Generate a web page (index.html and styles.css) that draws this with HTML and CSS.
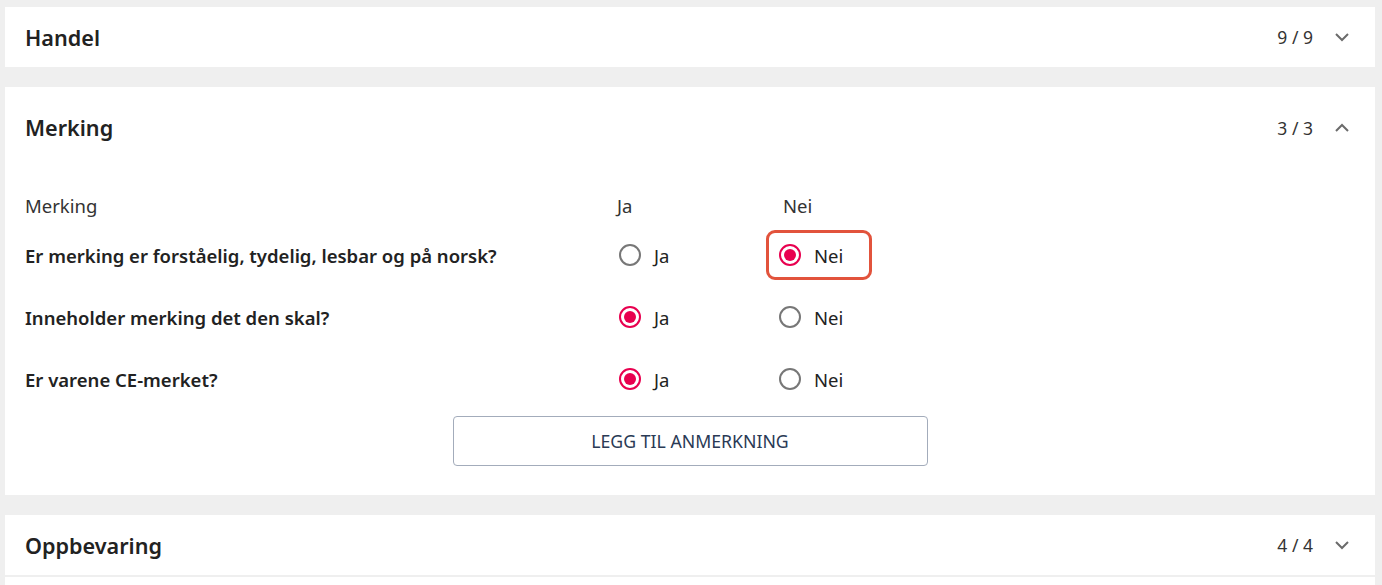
FILE: index.html
```html
<!DOCTYPE html>
<html lang="no">
<head>
<meta charset="utf-8">
<title>Kontroll</title>
<link rel="stylesheet" href="styles.css">
</head>
<body>
<div class="page">
  <section class="card">
    <div class="card-head">
      <h2 class="title">Handel</h2>
      <div class="meta"><span class="count">9 / 9</span>
        <svg class="chev" width="16" height="10" viewBox="0 0 16 10"><path d="M2 2 L8 8 L14 2" fill="none" stroke="#6b6b6b" stroke-width="2"/></svg>
      </div>
    </div>
  </section>

  <section class="card">
    <div class="card-head open">
      <h2 class="title">Merking</h2>
      <div class="meta"><span class="count">3 / 3</span>
        <svg class="chev" width="16" height="10" viewBox="0 0 16 10"><path d="M2 8 L8 2 L14 8" fill="none" stroke="#6b6b6b" stroke-width="2"/></svg>
      </div>
    </div>
    <div class="card-body">
      <div class="grid">
        <div class="cell colhead">Merking</div>
        <div class="cell colhead ja">Ja</div>
        <div class="cell colhead nei">Nei</div>

        <div class="cell q">Er merking er forståelig, tydelig, lesbar og på norsk?</div>
        <div class="cell"><label class="opt"><span class="radio"></span>Ja</label></div>
        <div class="cell"><label class="opt focus"><span class="radio on"></span>Nei</label></div>

        <div class="cell q">Inneholder merking det den skal?</div>
        <div class="cell"><label class="opt"><span class="radio on"></span>Ja</label></div>
        <div class="cell"><label class="opt"><span class="radio"></span>Nei</label></div>

        <div class="cell q">Er varene CE-merket?</div>
        <div class="cell"><label class="opt"><span class="radio on"></span>Ja</label></div>
        <div class="cell"><label class="opt"><span class="radio"></span>Nei</label></div>
      </div>
      <div class="actions"><button class="btn">LEGG TIL ANMERKNING</button></div>
    </div>
  </section>

  <section class="card">
    <div class="card-head">
      <h2 class="title">Oppbevaring</h2>
      <div class="meta"><span class="count">4 / 4</span>
        <svg class="chev" width="16" height="10" viewBox="0 0 16 10"><path d="M2 2 L8 8 L14 2" fill="none" stroke="#6b6b6b" stroke-width="2"/></svg>
      </div>
    </div>
  </section>
  <section class="card stub"></section>
</div>
</body>
</html>
```
FILE: styles.css
```css
* { box-sizing: border-box; }
html, body { margin: 0; padding: 0; }
body {
  background: #efefef;
  font-family: "Noto Sans", "Open Sans", sans-serif;
  color: #222;
  overflow: hidden;
  height: 585px;
}
.page {
  padding: 7px 7px 0 5px;
  display: flex;
  flex-direction: column;
  gap: 20px;
}
.card {
  background: #fff;
}
.card.stub { height: 20px; margin-top: -18px; }
.card-head {
  height: 60px;
  display: flex;
  align-items: center;
  justify-content: space-between;
  padding: 0 25px 0 20px;
}
.card-head.open { height: 81px; }
.title {
  margin: 0;
  font-size: 21.6px;
  font-weight: 600;
  color: #222;
}
.meta {
  display: flex;
  align-items: center;
  gap: 21px;
  color: #333;
  font-size: 17.5px;
}
.chev { display: block; }
.card-body {
  padding: 18px 20px 29px 20px;
}
.grid {
  display: grid;
  grid-template-columns: 592px 160px 1fr;
  grid-auto-rows: 62px;
  grid-template-rows: 38px;
  align-items: center;
}
.cell { font-size: 18.5px; }
.colhead { color: #333; font-weight: 400; }
.colhead.nei { padding-left: 6px; }
.q { font-weight: 600; color: #222; }
.opt {
  display: inline-flex;
  align-items: center;
  gap: 13px;
  color: #222;
  height: 50px;
  padding: 0 26px 0 10px;
  margin-left: -11px;
  border: 3px solid transparent;
  border-radius: 9px;
}
.opt.focus { border-color: #e2533c; }
.radio {
  width: 22px;
  height: 22px;
  border-radius: 50%;
  border: 2px solid #777;
  position: relative;
  flex: none;
}
.radio.on { border-color: #e8004f; }
.radio.on::after {
  content: "";
  position: absolute;
  left: 3px; top: 3px;
  width: 12px; height: 12px;
  border-radius: 50%;
  background: #e8004f;
}
.actions {
  display: flex;
  justify-content: center;
  padding-top: 6px;
}
.btn {
  width: 475px;
  height: 50px;
  background: #fff;
  border: 1px solid #a3acbb;
  border-radius: 4px;
  font-family: "Noto Sans", "Open Sans", sans-serif;
  font-size: 17.7px;
  color: #2a3a55;
}
```
